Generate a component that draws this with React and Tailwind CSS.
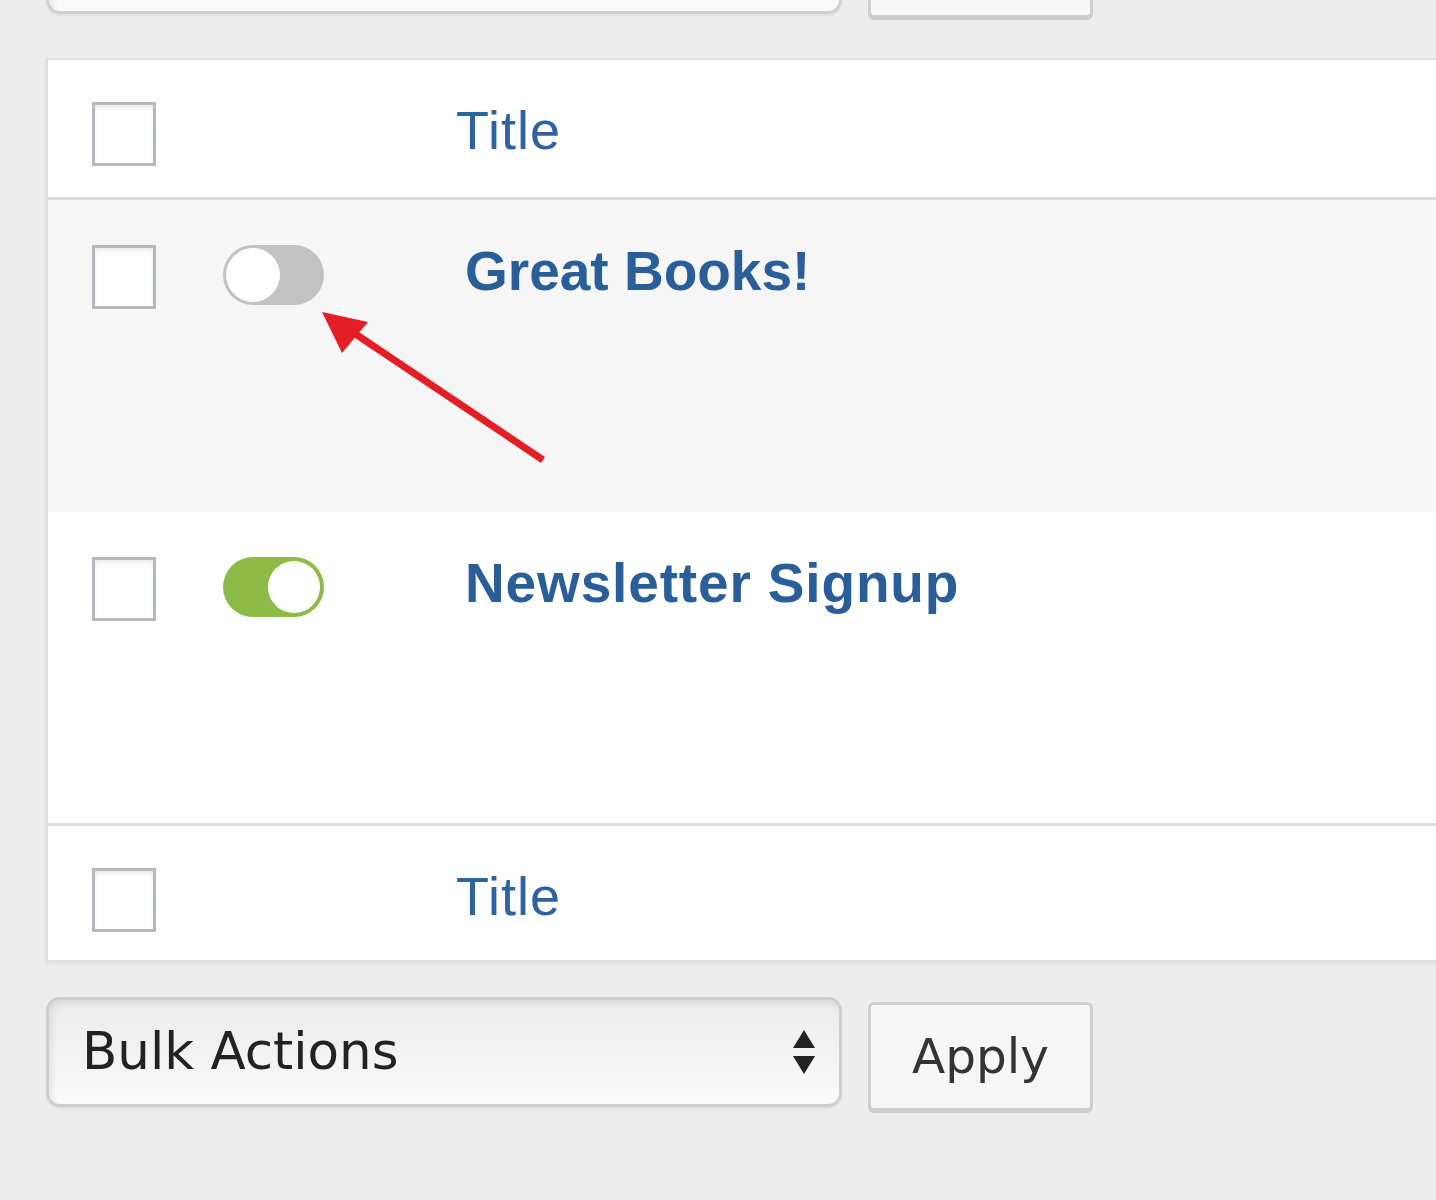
import React from "react";

const titleFont = { fontFamily: '"Liberation Sans", Arial, sans-serif' };
const uiFont = { fontFamily: '"DejaVu Sans", "Lucida Grande", sans-serif' };

function Checkbox() {
  return (
    <div className="w-[64px] h-[64px] shrink-0 border-[3px] border-[#b4b9be] bg-white shadow-[inset_0_3px_4px_rgba(0,0,0,0.08)]" />
  );
}

function Toggle({ on }) {
  return (
    <div
      className={
        on
          ? "w-[101px] h-[60px] shrink-0 rounded-full bg-[#8dbb47] p-[4px] flex justify-end"
          : "w-[101px] h-[60px] shrink-0 rounded-full bg-[#c2c2c2] p-[3px] flex justify-start"
      }
    >
      <div
        className={
          on
            ? "w-[52px] h-[52px] rounded-full bg-white"
            : "w-[54px] h-[54px] rounded-full bg-white"
        }
      />
    </div>
  );
}

function HeadRow({ bordered }) {
  return (
    <div
      className={
        bordered
          ? "h-[137px] bg-white flex items-start pt-[42px] pl-[44px] border-t-[3px] border-[#dcdcdc]"
          : "h-[140px] bg-white flex items-start pt-[42px] pl-[44px] border-b-[3px] border-[#dcdcdc]"
      }
    >
      <Checkbox />
      <div
        className="ml-[300px] text-[54px] leading-none tracking-[1px] text-[#2c63a0] mt-[1px]"
        style={titleFont}
      >
        Title
      </div>
    </div>
  );
}

function ItemRow({ title, on, alt, wide }) {
  return (
    <div
      className={
        alt
          ? "h-[312px] bg-[#f6f6f6] flex items-start pt-[45px] pl-[44px]"
          : "h-[311px] bg-white flex items-start pt-[45px] pl-[44px]"
      }
    >
      <Checkbox />
      <div className="ml-[67px]">
        <Toggle on={on} />
      </div>
      <div
        className={
          wide
            ? "ml-[141px] -mt-[1px] text-[55px] leading-none font-bold tracking-[0.85px] text-[#2a5e98]"
            : "ml-[141px] -mt-[1px] text-[55px] leading-none font-bold text-[#2a5e98]"
        }
        style={titleFont}
      >
        {title}
      </div>
    </div>
  );
}

function Select({ label }) {
  return (
    <div className="w-[796px] h-[110px] shrink-0 rounded-[14px] border-[3px] border-[#cfcfcf] bg-gradient-to-b from-[#ececec] via-[#f2f2f2] to-[#fbfbfb] shadow-[inset_3px_4px_6px_rgba(0,0,0,0.08),0_2px_2px_rgba(0,0,0,0.06)] flex items-center pl-[33px] pr-[22px]">
      <div className="flex-1 text-[51.5px] text-[#222] leading-none" style={uiFont}>
        {label}
      </div>
      <svg width="26" height="48" viewBox="0 0 26 48">
        <path d="M13 2 L24 20 L2 20 Z" fill="#222" />
        <path d="M13 46 L24 28 L2 28 Z" fill="#222" />
      </svg>
    </div>
  );
}

function ApplyButton({ label }) {
  return (
    <div
      className="w-[225px] h-[109px] shrink-0 rounded-[6px] border-[3px] border-[#cfcfcf] bg-[#f6f6f6] shadow-[0_2px_0_#cccccc] flex items-center justify-center text-[48.5px] text-[#333] leading-none"
      style={uiFont}
    >
      {label}
    </div>
  );
}

export default function App() {
  return (
    <div className="relative w-[1436px] h-[1200px] overflow-hidden bg-[#ededed]">
      <div className="flex items-start gap-[26px] pl-[46px] -mt-[96px]">
        <Select label="" />
        <div className="mt-[5px]">
          <ApplyButton label="" />
        </div>
      </div>

      <div className="mt-[40px] ml-[46px] -mr-[20px] border-t-[2px] border-l-[2px] border-[#e0e0e0] shadow-[0_3px_4px_rgba(0,0,0,0.08)]">
        <HeadRow />
        <ItemRow title="Great Books!" on={false} alt />
        <ItemRow title="Newsletter Signup" on wide />
        <HeadRow bordered />
      </div>

      <div className="flex items-start gap-[26px] pl-[46px] mt-[37px]">
        <Select label="Bulk Actions" />
        <div className="mt-[5px]">
          <ApplyButton label="Apply" />
        </div>
      </div>

      <svg
        className="absolute left-0 top-0 pointer-events-none"
        width="1436"
        height="1200"
        viewBox="0 0 1436 1200"
      >
        <line x1="543" y1="460" x2="345" y2="327" stroke="#e31e24" strokeWidth="7" />
        <path d="M322 312 L368 322 L342 353 Z" fill="#e31e24" />
      </svg>
    </div>
  );
}
